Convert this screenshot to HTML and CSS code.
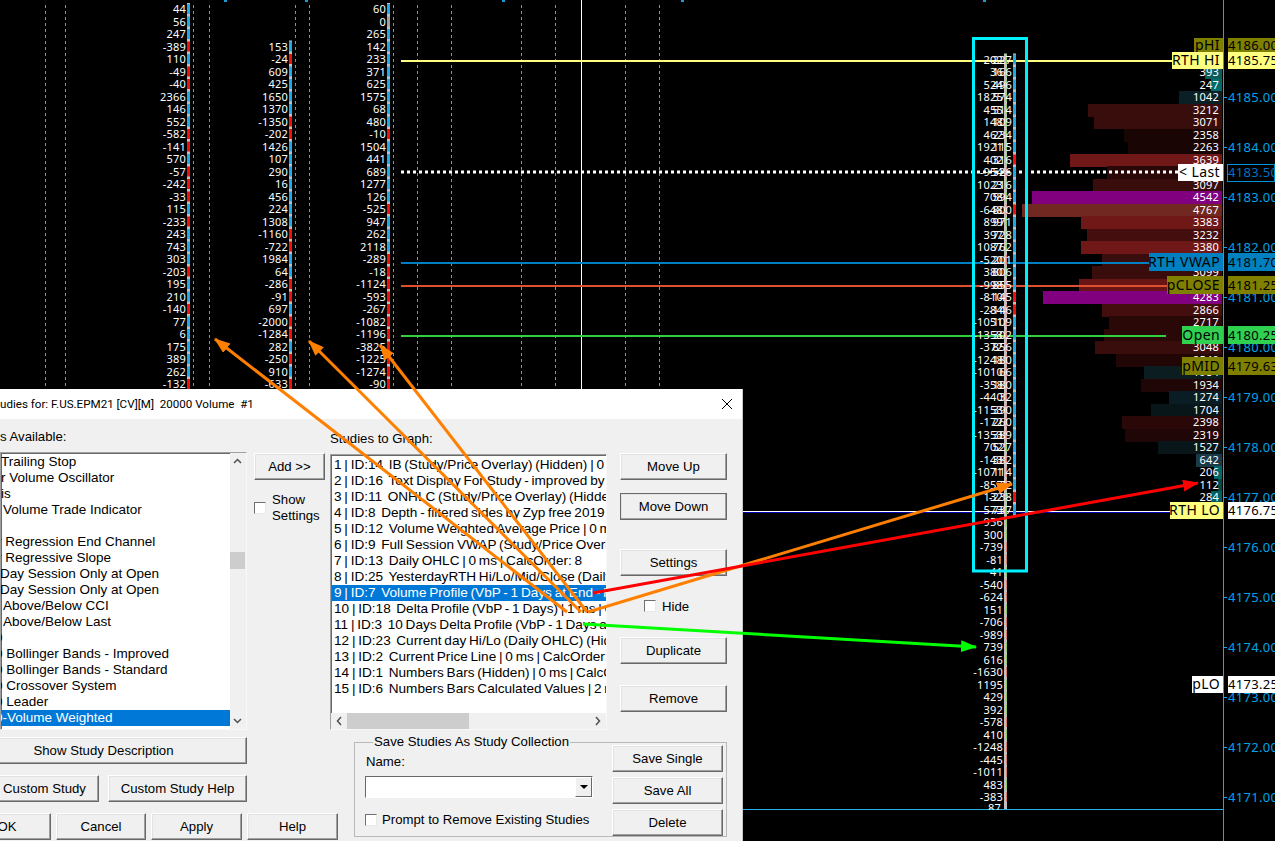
FILE: index.html
```html
<!DOCTYPE html>
<html lang="en">
<head>
    <meta charset="UTF-8">
    <title>Studies for chart</title>
    <link rel="stylesheet" href="styles.css">
</head>
<body>
    <div class="screen">
        <svg id="chart" class="chart" width="1275" height="841"></svg>

        <div class="dlg">
            <div class="dlg-title">
                <span class="dlg-title-text">udies for: F.US.EPM21 [CV][M]  20000 Volume  #1</span>
                <svg class="dlg-close" width="10" height="10" viewBox="0 0 10 10"><path d="M0 0L10 10M10 0L0 10" stroke="#000" fill="none"/></svg>
            </div>
            <div class="dlg-top">
                <div class="col1">
                    <div class="lbl">s Available:</div>
                    <div class="listbox list1">
                        <ul class="rows">
                            <li>Trailing Stop</li>
                            <li>r Volume Oscillator</li>
                            <li>is</li>
                            <li class="in2">Volume Trade Indicator</li>
                            <li> </li>
                            <li class="cut4">r Regression End Channel</li>
                            <li class="cut4">r Regressive Slope</li>
                            <li class="cut1">Day Session Only at Open</li>
                            <li class="cut1">Day Session Only at Open</li>
                            <li class="in2">Above/Below CCI</li>
                            <li class="in2">Above/Below Last</li>
                            <li class="cut6">0</li>
                            <li class="cut6">0 Bollinger Bands - Improved</li>
                            <li class="cut6">0 Bollinger Bands - Standard</li>
                            <li class="cut6">0 Crossover System</li>
                            <li class="cut6">0 Leader</li>
                            <li class="sel cut6">0-Volume Weighted</li>
                            <li> - Band Hierarchal Bands</li>
                        </ul>
                        <div class="vscroll">
                            <svg width="15" height="16" viewBox="0 0 15 16"><path d="M4 10L7.500 6.500L11 10" stroke="#505050" stroke-width="1.500" fill="none"/></svg>
                            <div class="vthumb"></div>
                            <svg class="vdown" width="15" height="16" viewBox="0 0 15 16"><path d="M4 6L7.500 9.500L11 6" stroke="#505050" stroke-width="1.500" fill="none"/></svg>
                        </div>
                    </div>
                </div>
                <div class="col2">
                    <button class="btn add">Add &gt;&gt;</button>
                    <div class="show">
                        <span class="check"></span>
                        <span>Show<br>Settings</span>
                    </div>
                </div>
                <div class="col3">
                    <div class="lbl">Studies to Graph:</div>
                    <div class="listbox list2">
                        <ul class="rows">
                            <li>1 | ID:14  IB (Study/Price Overlay) (Hidden) | 0 ms | CalcOrder: 1</li>
                            <li>2 | ID:16  Text Display For Study - improved by Zyp</li>
                            <li>3 | ID:11  ONHLC (Study/Price Overlay) (Hidden) | 0 ms</li>
                            <li>4 | ID:8  Depth - filtered sides by Zyp free 2019 edition</li>
                            <li>5 | ID:12  Volume Weighted Average Price | 0 ms</li>
                            <li>6 | ID:9  Full Session VWAP (Study/Price Overlay)</li>
                            <li>7 | ID:13  Daily OHLC | 0 ms | CalcOrder: 8</li>
                            <li>8 | ID:25  YesterdayRTH Hi/Lo/Mid/Close (Daily OHLC)</li>
                            <li class="sel">9 | ID:7  Volume Profile (VbP - 1 Days at End - Hidden)</li>
                            <li>10 | ID:18  Delta Profile (VbP - 1 Days) | 1 ms | CalcOrder</li>
                            <li>11 | ID:3  10 Days Delta Profile (VbP - 1 Days at End)</li>
                            <li>12 | ID:23  Current day Hi/Lo (Daily OHLC) (Hidden)</li>
                            <li>13 | ID:2  Current Price Line | 0 ms | CalcOrder: 13</li>
                            <li>14 | ID:1  Numbers Bars (Hidden) | 0 ms | CalcOrder: 14</li>
                            <li>15 | ID:6  Numbers Bars Calculated Values | 2 ms</li>
                        </ul>
                        <div class="hscroll">
                            <svg width="16" height="16" viewBox="0 0 16 16"><path d="M10 4L6.500 8L10 12" stroke="#505050" stroke-width="1.500" fill="none"/></svg>
                            <div class="hthumb"></div>
                            <svg class="hright" width="16" height="16" viewBox="0 0 16 16"><path d="M6 4L9.500 8L6 12" stroke="#505050" stroke-width="1.500" fill="none"/></svg>
                        </div>
                    </div>
                </div>
                <div class="col4">
                    <button class="btn up">Move Up</button>
                    <button class="btn btn-def down">Move Down</button>
                    <button class="btn settings">Settings</button>
                    <div class="hide"><span class="check"></span><span>Hide</span></div>
                    <button class="btn dup">Duplicate</button>
                    <button class="btn remove">Remove</button>
                </div>
            </div>
            <div class="dlg-bottom">
                <div class="bot-left">
                    <button class="btn desc">Show Study Description</button>
                    <div class="bot-row custom">
                        <button class="btn b-custom">Custom Study</button>
                        <button class="btn b-help">Custom Study Help</button>
                    </div>
                    <div class="bot-row actions">
                        <button class="btn b-ok">OK</button>
                        <button class="btn b-cancel">Cancel</button>
                        <button class="btn b-apply">Apply</button>
                        <button class="btn b-apply">Help</button>
                    </div>
                </div>
                <fieldset class="save">
                    <legend>Save Studies As Study Collection</legend>
                    <div class="save-left">
                        <div class="name-lbl">Name:</div>
                        <div class="combo"><span class="combo-btn"><i class="tri"></i></span></div>
                        <div class="prompt"><span class="check"></span><span>Prompt to Remove Existing Studies</span></div>
                    </div>
                    <div class="save-right">
                        <button class="btn">Save Single</button>
                        <button class="btn">Save All</button>
                        <button class="btn">Delete</button>
                    </div>
                </fieldset>
            </div>
        </div>

        <svg class="arrows" width="1275" height="841">
            <defs>
                <marker id="headO" markerUnits="userSpaceOnUse" markerWidth="18" markerHeight="14" refX="15" refY="6" orient="auto"><path d="M0 0L16 6L0 12z" fill="#ff8000"/></marker>
                <marker id="headR" markerUnits="userSpaceOnUse" markerWidth="18" markerHeight="14" refX="15" refY="6" orient="auto"><path d="M0 0L16 6L0 12z" fill="#ff0000"/></marker>
                <marker id="headG" markerUnits="userSpaceOnUse" markerWidth="18" markerHeight="14" refX="15" refY="6" orient="auto"><path d="M0 0L16 6L0 12z" fill="#00ff00"/></marker>
            </defs>
            <line class="a-o" x1="567" y1="612" x2="215" y2="339" marker-end="url(#headO)"/>
            <line class="a-o" x1="581" y1="612" x2="309" y2="341" marker-end="url(#headO)"/>
            <line class="a-o" x1="587" y1="612" x2="380" y2="345" marker-end="url(#headO)"/>
            <line class="a-o" x1="588" y1="612" x2="1012" y2="484" marker-end="url(#headO)"/>
            <line class="a-r" x1="593" y1="593" x2="1198" y2="483" marker-end="url(#headR)"/>
            <line class="a-g" x1="583" y1="624" x2="976" y2="647" marker-end="url(#headG)"/>
        </svg>
    </div>
    <script src="chart.js"></script>
</body>
</html>
```

FILE: styles.css
```css
* {
    margin: 0;
    padding: 0;
    box-sizing: border-box;
}
body {
    overflow: hidden;
    background: #000;
}
ul {
    list-style: none;
}
.screen {
    position: relative;
    width: 1275px;
    height: 841px;
    overflow: hidden;
}
.chart {
    display: block;
    background: #000;
    font-family: "Noto Sans", sans-serif;
}
.arrows {
    position: absolute;
    top: 0;
    left: 0;
}
.a-o, .a-r, .a-g {
    stroke-width: 3;
}
.a-o { stroke: #ff8000; }
.a-r { stroke: #ff0000; }
.a-g { stroke: #00ff00; }

/* chart text */
.num {
    font-size: 11px;
    fill: #fff;
    text-anchor: end;
    letter-spacing: .2px;
}
.axis {
    font-size: 13px;
    fill: #00a2e8;
    letter-spacing: .3px;
}
.tag-l {
    font-size: 14px;
    fill: #000;
    text-anchor: end;
    letter-spacing: .4px;
    white-space: pre;
}
.tag-r {
    font-size: 13px;
    fill: #000;
    letter-spacing: .3px;
}
.tag-blue {
    fill: #0070c0;
}

/* dialog */
.dlg {
    position: absolute;
    top: 389px;
    left: 0;
    width: 743px;
    height: 452px;
    overflow: hidden;
    background: #f0f0f0;
    border-right: 1px solid #c8c8c8;
    font-family: "Liberation Sans", sans-serif;
    font-size: 13.2px;
    color: #000;
}
.dlg-title {
    display: flex;
    justify-content: space-between;
    align-items: center;
    height: 30px;
    padding-right: 10px;
    background: #fff;
}
.dlg-title-text {
    font-family: Roboto, sans-serif;
    font-size: 11.6px;
    white-space: pre;
}
.lbl {
    height: 16px;
    line-height: 16px;
}
.dlg-top {
    display: flex;
    height: 318px;
}
.col1 {
    width: 247px;
    padding-top: 10px;
}
.col2 {
    width: 71px;
    margin-left: 7px;
    padding-top: 34px;
}
.col3 {
    width: 277px;
    margin-left: 5px;
    padding-top: 12px;
}
.col4 {
    display: flex;
    flex-direction: column;
    width: 107px;
    margin-left: 13px;
    padding-top: 34px;
}
.listbox {
    position: relative;
    background: #fff;
    border: 1px solid;
    border-color: #a0a0a0 #f8f8f8 #f8f8f8 #a0a0a0;
    box-shadow: inset 1px 1px #696969;
    overflow: hidden;
}
.list1 {
    display: flex;
    height: 278px;
    margin-top: 7px;
    font-size: 13.5px;
}
.list2 {
    display: flex;
    flex-direction: column;
    height: 276px;
    margin-top: 7px;
    font-size: 13.6px;
    word-spacing: -1px;
}
.rows {
    flex: 1;
    min-width: 0;
    padding-top: 2px;
    overflow: hidden;
}
.list1 .rows {
    padding-top: 1px;
}
.list2 .rows {
    padding-left: 1px;
}
.rows li {
    height: 16px;
    line-height: 16px;
    padding-left: 2px;
    white-space: pre;
}
.list1 .rows li {
    padding-left: 0;
}
/* names in the left list start before the window edge */
.list1 .rows .in2 {
    padding-left: 2px;
}
.cut1 {
    text-indent: -1px;
}
.cut4 {
    text-indent: -4px;
}
.cut6 {
    text-indent: -6px;
}
.rows .sel {
    background: #0078d7;
    color: #fff;
}
.vscroll {
    display: flex;
    flex-direction: column;
    flex: none;
    width: 16px;
    background: #f0f0f0;
}
.vthumb {
    width: 15px;
    height: 17px;
    margin-top: 83px;
    background: #cdcdcd;
}
.vdown {
    margin-top: auto;
}
.hscroll {
    display: flex;
    flex: none;
    height: 16px;
    background: #f0f0f0;
}
.hthumb {
    width: 122px;
    background: #cdcdcd;
}
.hright {
    margin-left: auto;
}
.check {
    display: block;
    flex: none;
    width: 12px;
    height: 12px;
    background: #fff;
    border: 1px solid;
    border-color: #707070 #e8e8e8 #e8e8e8 #707070;
}
.btn {
    display: block;
    flex: none;
    height: 27px;
    background: #f0f0f0;
    border: 1px solid;
    border-color: #fff #696969 #696969 #fff;
    box-shadow: inset -1px -1px #a0a0a0, inset 1px 1px #e3e3e3;
    font-family: inherit;
    font-size: inherit;
    color: #000;
}
.btn-def {
    outline: 1px solid #696969;
    outline-offset: -1px;
    border-color: #fff #555 #555 #fff;
}
.add {
    width: 71px;
}
.show {
    display: flex;
    align-items: center;
    gap: 6px;
    margin-top: 12px;
    line-height: 16px;
}
.col4 .btn {
    width: 107px;
}
.down {
    margin-top: 13px;
}
.settings {
    margin-top: 29px;
}
.hide {
    display: flex;
    align-items: center;
    gap: 6px;
    height: 16px;
    margin-top: 22px;
    padding-left: 24px;
}
.dup {
    margin-top: 23px;
}
.remove {
    margin-top: 21px;
}
.dlg-bottom {
    display: flex;
    gap: 15px;
}
.bot-left {
    width: 339px;
    height: 104px;
}
/* these three buttons run off the left edge of the window */
.desc {
    width: 287px;
    margin-left: -40px;
}
.bot-row {
    display: flex;
}
.custom {
    gap: 9px;
    margin-top: 11px;
}
.b-custom {
    width: 109px;
    margin-left: -10px;
}
.b-help {
    width: 139px;
}
.actions {
    gap: 5px;
    margin-top: 11px;
}
.b-ok {
    width: 88px;
    margin-left: -37px;
}
.b-cancel {
    width: 90px;
}
.b-apply {
    width: 91px;
}
.save {
    display: flex;
    justify-content: space-between;
    width: 373px;
    height: 103px;
    margin-top: -3px;
    padding: 0 3px 0 10px;
    border: 1px solid #b8b8b8;
}
.save legend {
    margin-left: 8px;
    padding: 0 1px;
    line-height: 16px;
}
.save-left {
    width: 228px;
}
.name-lbl {
    height: 16px;
    line-height: 16px;
    margin-top: 4px;
    padding-left: 1px;
}
.combo {
    display: flex;
    justify-content: flex-end;
    height: 22px;
    margin-top: 6px;
    background: #fff;
    border: 1px solid;
    border-color: #696969 #fff #fff #696969;
}
.combo-btn {
    display: flex;
    align-items: center;
    justify-content: center;
    width: 17px;
    background: #f0f0f0;
    border: 1px solid;
    border-color: #fff #696969 #696969 #fff;
}
.tri {
    width: 0;
    height: 0;
    border: 4px solid transparent;
    border-top: 4px solid #000;
    border-bottom: 0;
}
.prompt {
    display: flex;
    align-items: center;
    gap: 5px;
    margin-top: 14px;
    white-space: nowrap;
}
.save-right {
    width: 111px;
    margin-top: -5px;
}
.save-right .btn {
    width: 111px;
    margin-bottom: 5px;
}
```

FILE: chart.js
```js
var svg = document.getElementById('chart');
var NS = 'http://www.w3.org/2000/svg';

function add(tag, attrs, text) {
    var el = document.createElementNS(NS, tag);
    for (var k in attrs) {
        el.setAttribute(k, attrs[k]);
    }
    if (text !== undefined) {
        el.textContent = text;
    }
    svg.appendChild(el);
    return el;
}
function rect(x, y, w, h, fill) {
    add('rect', { x: x, y: y, width: w, height: h, fill: fill });
}
function hline(x1, x2, y, color, width, dash) {
    var a = { x1: x1, x2: x2, y1: y, y2: y, stroke: color, 'stroke-width': width };
    if (dash) {
        a['stroke-dasharray'] = dash;
    }
    add('line', a);
}

var ROW = 12.5;

// bits of cut off text on the top edge
[224, 305, 502, 681, 983].forEach(function (x) {
    rect(x, 0, 3, 2, '#1a9ad0');
});

// session separators
[45, 65, 193, 209, 295, 309, 393, 417, 451, 521, 555, 625, 659].forEach(function (x) {
    add('line', { x1: x + .5, x2: x + .5, y1: 5, y2: 389, stroke: '#909090', 'stroke-dasharray': '3 3' });
});
rect(581, 0, 1, 389, '#fff');

// volume profile: start x, colour, value
var prof = [
    [1205, '#0c5c5c', 393], [1211, '#006b6b', 247], [1179, '#0a1f26', 1042], [1088, '#3a0d0d', 3212],
    [1094, '#3a0d0d', 3071], [1124, '#1a0505', 2358], [1128, '#1a0505', 2263], [1070, '#701818', 3639],
    [1107, '#2a0808', 2958], [1093, '#3a0d0d', 3097], [1032, '#800080', 4542], [1022, '#702820', 4767],
    [1081, '#701818', 3383], [1087, '#450e0e', 3232], [1081, '#701818', 3380], [1102, '#3a0d0d', 2988],
    [1092, '#3a0d0d', 3099], [1079, '#6a1515', 3452], [1043, '#800080', 4283], [1102, '#450e0e', 2866],
    [1109, '#2a0808', 2717], [1104, '#2a0808', 2802], [1095, '#3a0d0d', 3048], [1116, '#220606', 2540],
    [1144, '#0c1d22', 1984], [1141, '#200606', 1934], [1169, '#0a1d24', 1274], [1151, '#08161a', 1704],
    [1122, '#2a0808', 2398], [1125, '#200606', 2319], [1158, '#08161a', 1527], [1196, '#1a3a48', 642],
    [1214, '#006868', 206], [1218, '#004a4a', 112], [1211, '#005f5f', 284]
];
prof.forEach(function (p, i) {
    var y = 72 + i * ROW;
    rect(p[0], Math.round(y - 6), 1222 - p[0], 13, p[1]);
});

// study lines
hline(401, 1172, 61, '#ffff80', 2);
hline(401, 1150, 263, '#0080c0', 2);
hline(401, 1167, 286, '#e05030', 2);
hline(401, 1166, 336, '#30d040', 2);
hline(742, 1170, 511.5, '#fff', 1);
hline(742, 1170, 512.5, '#0000b0', 1);
hline(742, 1223, 809.5, '#28b0e8', 1);
hline(401, 1178, 172, '#fff', 3, '3 3');

prof.forEach(function (p, i) {
    add('text', { 'class': 'num', x: 1219, y: 76 + i * ROW }, p[2]);
});

// delta number columns
function column(values, first, right, barX, y0, neg, pos, greyRight) {
    var top = y0 + first * ROW - 6;
    rect(barX, top, 3, values.length * ROW, '#c0c0c0');
    values.forEach(function (v, i) {
        var y = y0 + (first + i) * ROW;
        add('text', { 'class': 'num', x: right, y: y + 4 }, v);
        var col = v < 0 ? neg : v > 0 ? pos : '#a0a0a0';
        if (greyRight) {
            rect(barX + 2, y - 5, 1, 10, col);
        } else {
            rect(barX, y - 5, 3, 10, col);
        }
    });
}
var RED = '#f01010', BLUE = '#20a8e8';
column([44, 56, 247, -389, 110, -49, -40, 2366, 146, 552, -582, -141, 570, -57, -242, -33, 115, -233, 243, 743, 303, -203, 195, 210, -140, 77, 6, 175, 389, 262, -132],
    0, 186, 187, 9, RED, BLUE);
column([153, -24, 609, 425, 1650, 1370, -1350, -202, 1426, 107, 290, 16, 456, 224, 1308, -1160, -722, 1984, 64, -286, -91, 697, -2000, -1284, 282, -250, 910, -633],
    3, 288, 289, 9, RED, BLUE);
column([60, 0, 265, 142, 233, 371, 625, 1575, 68, 480, -10, 1504, 441, 689, 1277, 126, -525, 947, 262, 2118, -289, -18, -1124, -593, -267, -1082, -1196, -3825, -1225, -1274, -90],
    0, 386, 387, 9, RED, BLUE);

// last column is cut at the bottom line, its numbers clip under it
column([202, 36, 524, 1825, 455, 148, 462, 1921, 402, -954, 1023, 708, -648, 899, 397, 1087, -520, 380, -998, -810, -284, -1051, -1353, -372, -1248, -1010, -358, -440, -1153, -172, -1353, 702, -143, -1071, -857, 132, 573, 956,
    300, -739, -81, 41, -540, -624, 151, -706, -989, 739, 616, -1630, 1195, 429, 392, -578, 410, -1248, -445, -1011, 483, -383],
    0, 1003, 1004, 59.5, '#d88070', '#90c860', true);
column([227, 166, 496, 574, 514, 109, 234, 115, -316, 526, 216, 594, -800, 971, 728, 762, 201, 806, 855, -145, -146, 109, 302, 856, 180, 66, 180, 32, 390, 260, 389, 527, 382, 114, 72, -238, 737],
    0, 1012, 1013, 59.5, RED, BLUE);
add('text', { 'class': 'num', x: 1001, y: 812 }, 87);
rect(960, 810, 60, 12, '#000');
rect(1004, 803, 3, 6, '#c0c0c0');

// selection box
add('rect', { x: 973.5, y: 38.5, width: 53, height: 532.5, fill: 'none', stroke: '#00f0ff', 'stroke-width': 3 });

// price axis
rect(1223, 0, 1, 841, '#18a8e8');
for (var i = 0; i < 15; i++) {
    var py = 97 + i * 50;
    rect(1224, py, 3, 1, '#18a8e8');
    add('text', { 'class': 'axis', x: 1228, y: py + 5 }, (4185 - i) + '.00');
}

// labels left of the axis with a price tag right of it
function tag(name, price, x, top, h, bg, blue) {
    rect(x, top, 1223 - x, h, bg);
    add('text', { 'class': 'tag-l', x: 1220, y: top + h / 2 + 4.5 }, name);
    if (blue) {
        add('rect', { x: 1227.5, y: top + .5, width: 47, height: h, fill: '#000', stroke: '#0090d8' });
    } else {
        rect(1228, top, 47, h, bg);
    }
    add('text', { 'class': blue ? 'tag-r tag-blue' : 'tag-r', x: 1228, y: top + h / 2 + 4.5 }, price);
}
var OLIVE = '#808000', YEL = '#ffff80';
tag('pHI', '4186.00', 1194, 38, 14, OLIVE);
tag('RTH HI', '4185.75', 1172, 52, 17, YEL);
tag('< Last', '4183.50', 1178, 164, 17, '#fff', true);
tag('RTH VWAP', '4181.70', 1149, 253, 18, '#0080c0');
tag('pCLOSE', '4181.25', 1167, 276, 18, OLIVE);
tag('Open', '4180.25', 1182, 326, 18, '#30d050');
tag('pMID', '4179.63', 1182, 357, 18, OLIVE);
tag('RTH LO', '4176.75', 1170, 502, 17, YEL);
rect(1228, 502, 47, 17, '#fff');
add('text', { 'class': 'tag-r', x: 1228, y: 515 }, '4176.75');
tag('pLO', '4173.25', 1192, 676, 17, '#fff');
```
